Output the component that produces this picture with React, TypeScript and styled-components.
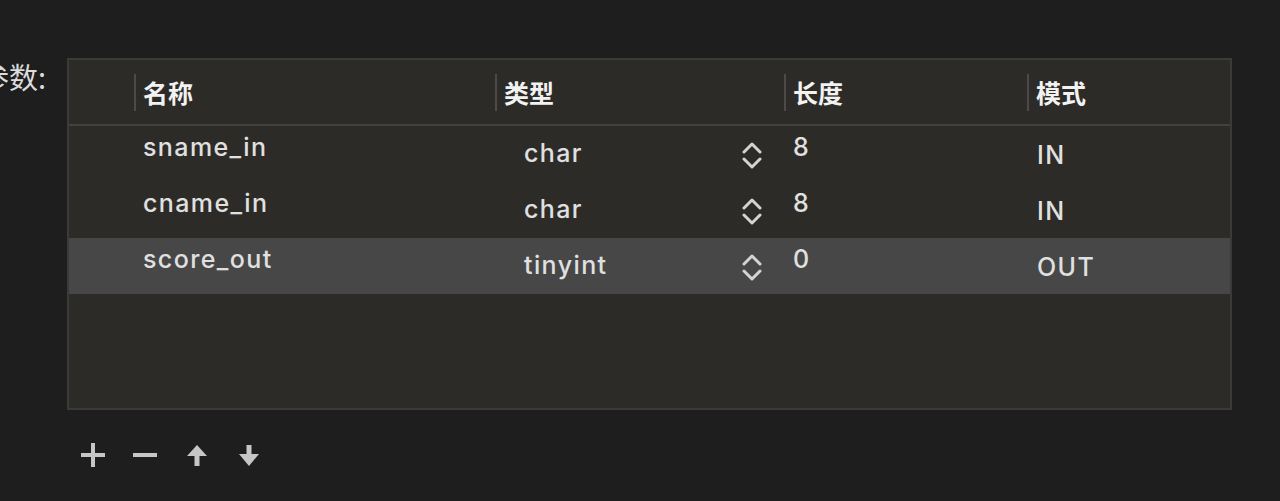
import React from "react";
import styled, { createGlobalStyle } from "styled-components";

const GlobalStyle = createGlobalStyle`
  html, body {
    margin: 0;
    padding: 0;
    background: #1e1e1e;
    overflow: hidden;
  }
  body {
    font-family: Inter, "Noto Sans CJK SC", sans-serif;
    color: #dedede;
  }
`;

const Page = styled.div`
  width: 1280px;
  height: 501px;
  padding-top: 58px;
  box-sizing: border-box;
  display: flex;
  flex-direction: column;
`;

const Section = styled.div`
  display: flex;
  gap: 21px;
`;

const Label = styled.div`
  width: 46px;
  display: flex;
  justify-content: flex-end;
  font-size: 29px;
  line-height: 36px;
  white-space: nowrap;
  color: #dcdcdc;
  font-family: "Noto Sans CJK SC", sans-serif;
`;

const Table = styled.div`
  width: 1165px;
  height: 352px;
  box-sizing: border-box;
  border: 2px solid #3a3a39;
  background: #2d2b28;
  display: flex;
  flex-direction: column;
`;

const COLS = "65px 361px 289px 243px 1fr";

const HeaderRow = styled.div`
  display: grid;
  grid-template-columns: ${COLS};
  height: 64px;
  border-bottom: 2px solid #434240;
`;

const HeaderCell = styled.div`
  display: flex;
  align-items: center;
  gap: 7px;
  font-family: "Noto Sans CJK SC", sans-serif;
  font-weight: 700;
  font-size: 25px;
  color: #f2f2f2;
`;

const Divider = styled.span`
  width: 2px;
  height: 37px;
  background: #4b4a47;
`;

const Row = styled.div<{ $selected?: boolean }>`
  display: grid;
  grid-template-columns: ${COLS};
  height: 56px;
  background: ${(p) => (p.$selected ? "#474747" : "transparent")};
`;

const Cell = styled.div<{ $top: number; $left: number }>`
  padding-top: ${(p) => p.$top}px;
  padding-left: ${(p) => p.$left}px;
  font-size: 25px;
  font-weight: 500;
  line-height: 30px;
  letter-spacing: 1.4px;
  color: #e0e0e0;
  white-space: nowrap;
`;

const TypeCell = styled(Cell)`
  display: flex;
  justify-content: space-between;
  padding-right: 22px;
`;

const Stepper = styled.svg`
  margin-top: 4px;
`;

const Toolbar = styled.div`
  display: flex;
  gap: 28px;
  padding: 33px 0 0 81px;
`;

const ToolButton = styled.button`
  width: 24px;
  height: 24px;
  padding: 0;
  border: none;
  background: none;
  display: flex;
  align-items: center;
  justify-content: center;
  cursor: pointer;
`;

type Param = { name: string; type: string; length: string; mode: string };

const params: Param[] = [
  { name: "sname_in", type: "char", length: "8", mode: "IN" },
  { name: "cname_in", type: "char", length: "8", mode: "IN" },
  { name: "score_out", type: "tinyint", length: "0", mode: "OUT" },
];

const Chevrons = () => (
  <Stepper width="20" height="27" viewBox="0 0 20 27" fill="none">
    <path d="M2 10 L10 2 L18 10" stroke="#d4d4d4" strokeWidth="3" strokeLinecap="round" strokeLinejoin="round" />
    <path d="M2 17 L10 25 L18 17" stroke="#d4d4d4" strokeWidth="3" strokeLinecap="round" strokeLinejoin="round" />
  </Stepper>
);

const ICON = "#c6c6c6";

const App = () => {
  return (
    <>
      <GlobalStyle />
      <Page>
        <Section>
          <Label>参数:</Label>
          <Table>
            <HeaderRow>
              <div />
              <HeaderCell>
                <Divider />
                名称
              </HeaderCell>
              <HeaderCell>
                <Divider />
                类型
              </HeaderCell>
              <HeaderCell>
                <Divider />
                长度
              </HeaderCell>
              <HeaderCell>
                <Divider />
                模式
              </HeaderCell>
            </HeaderRow>
            {params.map((p, i) => (
              <Row key={p.name} $selected={i === 2}>
                <div />
                <Cell $top={6} $left={9}>
                  {p.name}
                </Cell>
                <TypeCell $top={12} $left={29}>
                  <span>{p.type}</span>
                  <Chevrons />
                </TypeCell>
                <Cell $top={6} $left={9}>
                  {p.length}
                </Cell>
                <Cell $top={14} $left={10}>
                  {p.mode}
                </Cell>
              </Row>
            ))}
          </Table>
        </Section>
        <Toolbar>
          <ToolButton aria-label="add">
            <svg width="24" height="24" viewBox="0 0 24 24">
              <rect x="10" y="0" width="4" height="24" fill={ICON} />
              <rect x="0" y="10" width="24" height="4" fill={ICON} />
            </svg>
          </ToolButton>
          <ToolButton aria-label="remove">
            <svg width="24" height="24" viewBox="0 0 24 24">
              <rect x="0" y="10" width="24" height="4" fill={ICON} />
            </svg>
          </ToolButton>
          <ToolButton aria-label="move up">
            <svg width="20" height="21" viewBox="0 0 20 21">
              <path d="M10 0 L20 11 L0 11 Z" fill={ICON} />
              <rect x="7.5" y="10" width="5" height="11" fill={ICON} />
            </svg>
          </ToolButton>
          <ToolButton aria-label="move down">
            <svg width="20" height="21" viewBox="0 0 20 21">
              <rect x="7.5" y="0" width="5" height="11" fill={ICON} />
              <path d="M0 9 L20 9 L10 21 Z" fill={ICON} />
            </svg>
          </ToolButton>
        </Toolbar>
      </Page>
    </>
  );
};

export default App;
